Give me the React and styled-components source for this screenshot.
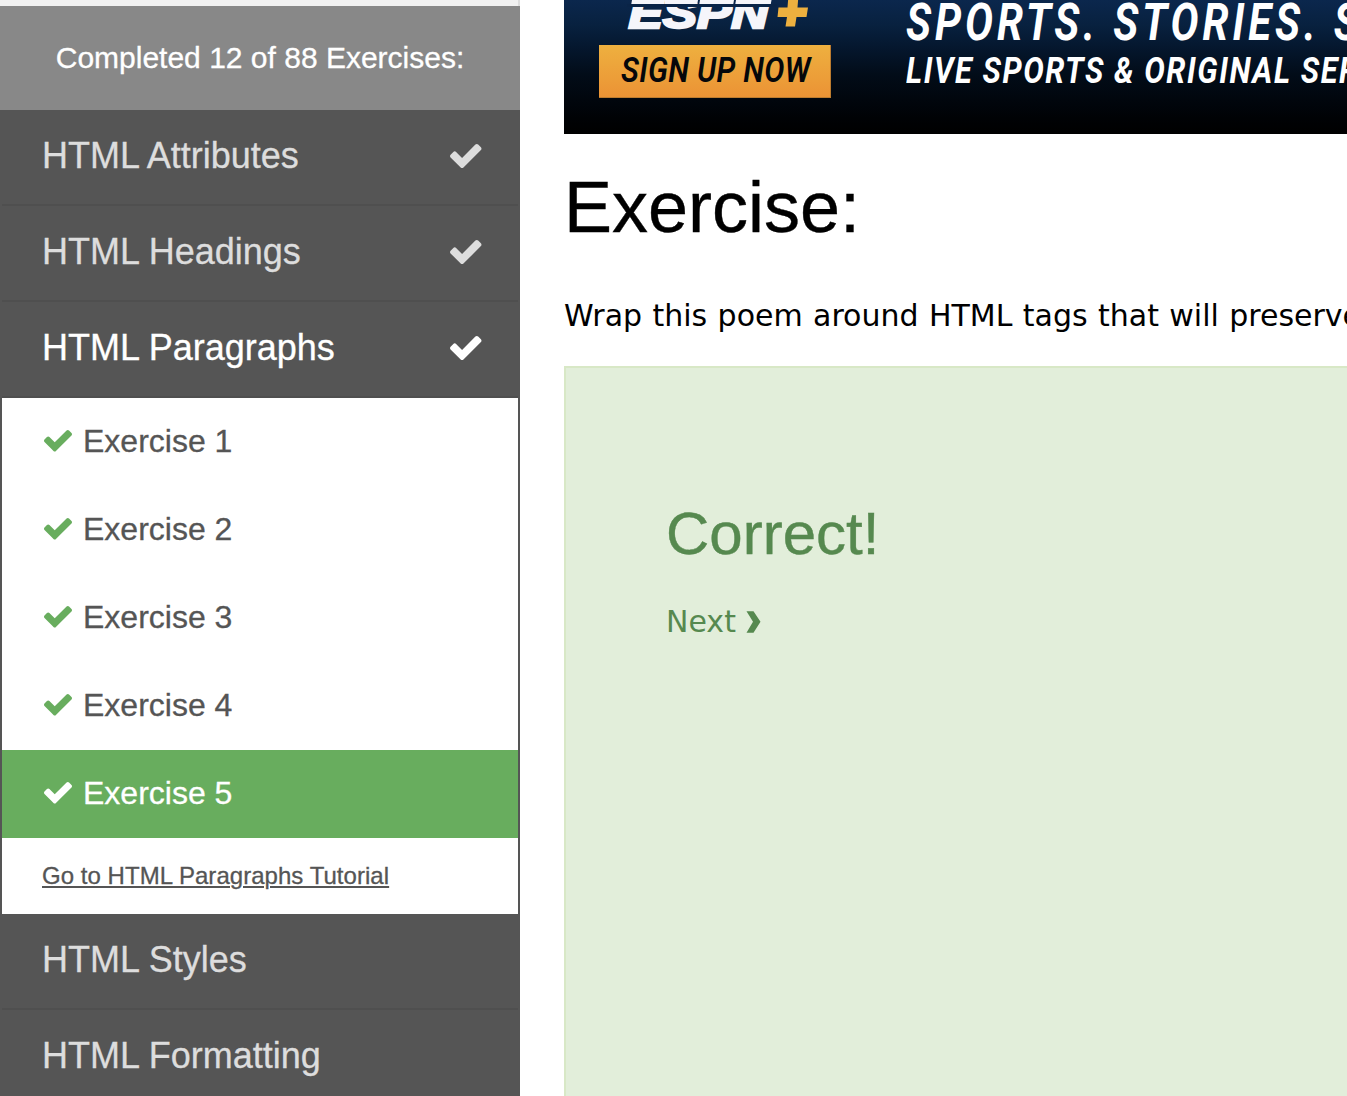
import React from "react";
import styled, { createGlobalStyle } from "styled-components";

const Global = createGlobalStyle`
  * { box-sizing: border-box; }
  html, body { margin: 0; overflow: hidden; background: #fff; }
  body { font-family: "Liberation Sans", Arial, sans-serif; }
`;

const Page = styled.div`
  display: flex;
  width: 100vw;
  height: 1096px;
  overflow: hidden;
  background: #fff;
`;

const Sidebar = styled.nav`
  flex: 0 0 520px;
  height: 100%;
  overflow: hidden;
`;

const TopStrip = styled.div`
  height: 6px;
  background: #f1f1f1;
  border-right: 2px solid #ddd;
`;

const Progress = styled.div`
  height: 104px;
  background: #888;
  color: #fff;
  text-align: center;
  font-size: 30px;
  line-height: 104px;
  -webkit-text-stroke: 0.3px;
`;

const Topics = styled.div`
  border: solid #555;
  border-width: 0 2px;
  background: #555;
`;

const Topic = styled.div`
  display: flex;
  justify-content: space-between;
  align-items: center;
  height: 96px;
  padding: 0 36.5px 2px 40px;
  border-bottom: 2px solid #4f4f4f;
  color: ${(p) => (p.$active ? "#fff" : "#ddd")};
  font-size: 36px;
  white-space: nowrap;
  -webkit-text-stroke: 0.3px;
`;

const Exercise = styled.a`
  display: flex;
  align-items: center;
  gap: 11px;
  height: 88px;
  padding: 0 42px 2px;
  background: ${(p) => (p.$active ? "#68ad5e" : "#fff")};
  color: ${(p) => (p.$active ? "#fff" : "#555")};
  font-size: 32px;
  -webkit-text-stroke: 0.3px;
`;

const TutorialRow = styled.div`
  height: 76px;
  padding: 0 40px;
  background: #fff;
  line-height: 76px;
`;

const TutorialLink = styled.a`
  color: #555;
  font-size: 24px;
  letter-spacing: 0.04px;
  text-decoration: underline;
  text-decoration-thickness: 2px;
  text-underline-offset: 2px;
  -webkit-text-stroke: 0.3px;
`;

const CheckSvg = styled.svg`
  display: block;
  flex: none;
  width: ${(p) => p.$w}px;
  height: ${(p) => p.$w * 0.7665}px;
  fill: ${(p) => p.$color || "currentColor"};
  stroke: none;
`;

const Check = ({ width, color }) => (
  <CheckSvg $w={width} $color={color} viewBox="121 334 1550 1188">
    <path d="M1671 566q0 40-28 68l-724 724-136 136q-28 28-68 28t-68-28l-136-136-362-362q-28-28-28-68t28-68l136-136q28-28 68-28t68 28l294 295 656-657q28-28 68-28t68 28l136 136q28 28 28 68z" />
  </CheckSvg>
);

const Main = styled.main`
  flex: 1 0 auto;
  width: 827px;
  padding-left: 44px;
  overflow: hidden;
`;

const Banner = styled.div`
  display: flex;
  height: 134px;
  width: 900px;
  overflow: hidden;
  background: linear-gradient(#0b274d 0, #08213f 25px, #051830 45px, #020c18 75px, #01060d 100px, #000205 118px, #000 134px);
`;

const Brand = styled.div`
  flex: 0 0 342px;
  padding-left: 35px;
`;

const Logo = styled.svg`
  display: block;
  width: 232px;
  height: 45px;
`;

const SignUp = styled.div`
  display: flex;
  align-items: center;
  width: 232px;
  height: 53px;
  padding-left: 22px;
  background: linear-gradient(#eeb03f, #eb9335);
  border: 1px solid #bd7c2f;
  border-width: 0 1px 1px 0;
`;

const AdText = styled.span`
  display: block;
  width: max-content;
  font-family: Roboto, sans-serif;
  font-style: italic;
  font-weight: ${(p) => p.$weight || 700};
  font-size: ${(p) => p.$size}px;
  line-height: ${(p) => p.$line}px;
  letter-spacing: ${(p) => p.$gap || 0}px;
  color: ${(p) => p.$color || "#fff"};
  white-space: nowrap;
  transform: scaleX(${(p) => p.$stretch});
  transform-origin: 0 50%;
`;

const Slogan = styled.div`
  flex: none;
`;

const Title = styled.h1`
  margin: 0;
  padding-top: 32px;
  font-weight: 400;
  font-size: 72px;
  line-height: 82px;
  -webkit-text-stroke: 0.4px;
`;

const Task = styled.p`
  margin: 0;
  padding-top: 48px;
  height: 118px;
  font-family: "DejaVu Sans", Verdana, sans-serif;
  font-size: 30px;
  line-height: 40px;
  word-spacing: 0.85px;
  white-space: nowrap;
`;

const Result = styled.section`
  height: 740px;
  width: 900px;
  padding: 132px 0 0 100px;
  background: #e2eeda;
  border: 2px solid #d8e8c6;
  color: #56894f;
`;

const Correct = styled.h2`
  margin: 0;
  font-weight: 400;
  font-size: 60px;
  line-height: 68px;
  -webkit-text-stroke: 0.4px;
`;

const Next = styled.a`
  display: flex;
  align-items: center;
  gap: 10.5px;
  margin-top: 34px;
  font-family: "DejaVu Sans", Verdana, sans-serif;
  font-size: 30px;
  line-height: 40px;
`;

const Chevron = styled.svg`
  width: 15px;
  height: 22px;
  fill: currentColor;
`;

export default function App() {
  return (
    <>
      <Global />
      <Page>
        <Sidebar>
          <TopStrip />
          <Progress>Completed 12 of 88 Exercises:</Progress>
          <Topics>
            <Topic>HTML Attributes<Check width={31.5} /></Topic>
            <Topic>HTML Headings<Check width={31.5} /></Topic>
            <Topic $active>HTML Paragraphs<Check width={31.5} /></Topic>
            {[1, 2, 3, 4, 5].map((n) => (
              <Exercise key={n} $active={n === 5}>
                <Check width={28} color={n === 5 ? "#fff" : "#68ad5e"} />
                Exercise {n}
              </Exercise>
            ))}
            <TutorialRow>
              <TutorialLink>Go to HTML Paragraphs Tutorial</TutorialLink>
            </TutorialRow>
            <Topic>HTML Styles</Topic>
            <Topic>HTML Formatting</Topic>
          </Topics>
        </Sidebar>
        <Main>
          <Banner>
            <Brand>
              <Logo viewBox="0 0 232 45">
                <text x="29.500" y="27.500" textLength="140" lengthAdjust="spacingAndGlyphs" fontFamily="Liberation Sans" fontWeight="700" fontStyle="italic" fontSize="43" fill="#f5f5fa" stroke="#f5f5fa" strokeWidth="2.500">ESPN</text>
                <path d="M28 5.500H178" stroke="#0a2447" strokeWidth="3" />
                <path d="M33 0H64L63.300 4H32.300ZM66 0H99L98.300 4H65.300ZM101 0H135L134.300 4H100.300ZM137 0H172.500L171.800 4H136.300Z" fill="#f5f5fa" />
                <path d="M194 -5H204L203 7.500H213.500L212 17H202L200.500 26.500H191L192.500 17H183L184 7.500H193Z" transform="translate(-4.500 0)" fill="#edb03f" />
              </Logo>
              <SignUp>
                <AdText $size={35} $line={50} $gap={0.4} $stretch={0.86} $weight={600} $color="#05070a">SIGN UP NOW</AdText>
              </SignUp>
            </Brand>
            <Slogan>
              <AdText $size={51} $line={46} $gap={4.8} $stretch={0.82}>SPORTS. STORIES. S</AdText>
              <AdText $size={37} $line={50} $gap={1.9} $stretch={0.83}>LIVE SPORTS &amp; ORIGINAL SER</AdText>
            </Slogan>
          </Banner>
          <Title>Exercise:</Title>
          <Task>Wrap this poem around HTML tags that will preserve</Task>
          <Result>
            <Correct>Correct!</Correct>
            <Next>
              Next
              <Chevron viewBox="0 0 15 22">
                <path d="M0.500 0.200H7.500L14.500 10.800L7.500 21.700H0.500L7 10.800Z" />
              </Chevron>
            </Next>
          </Result>
        </Main>
      </Page>
    </>
  );
}
